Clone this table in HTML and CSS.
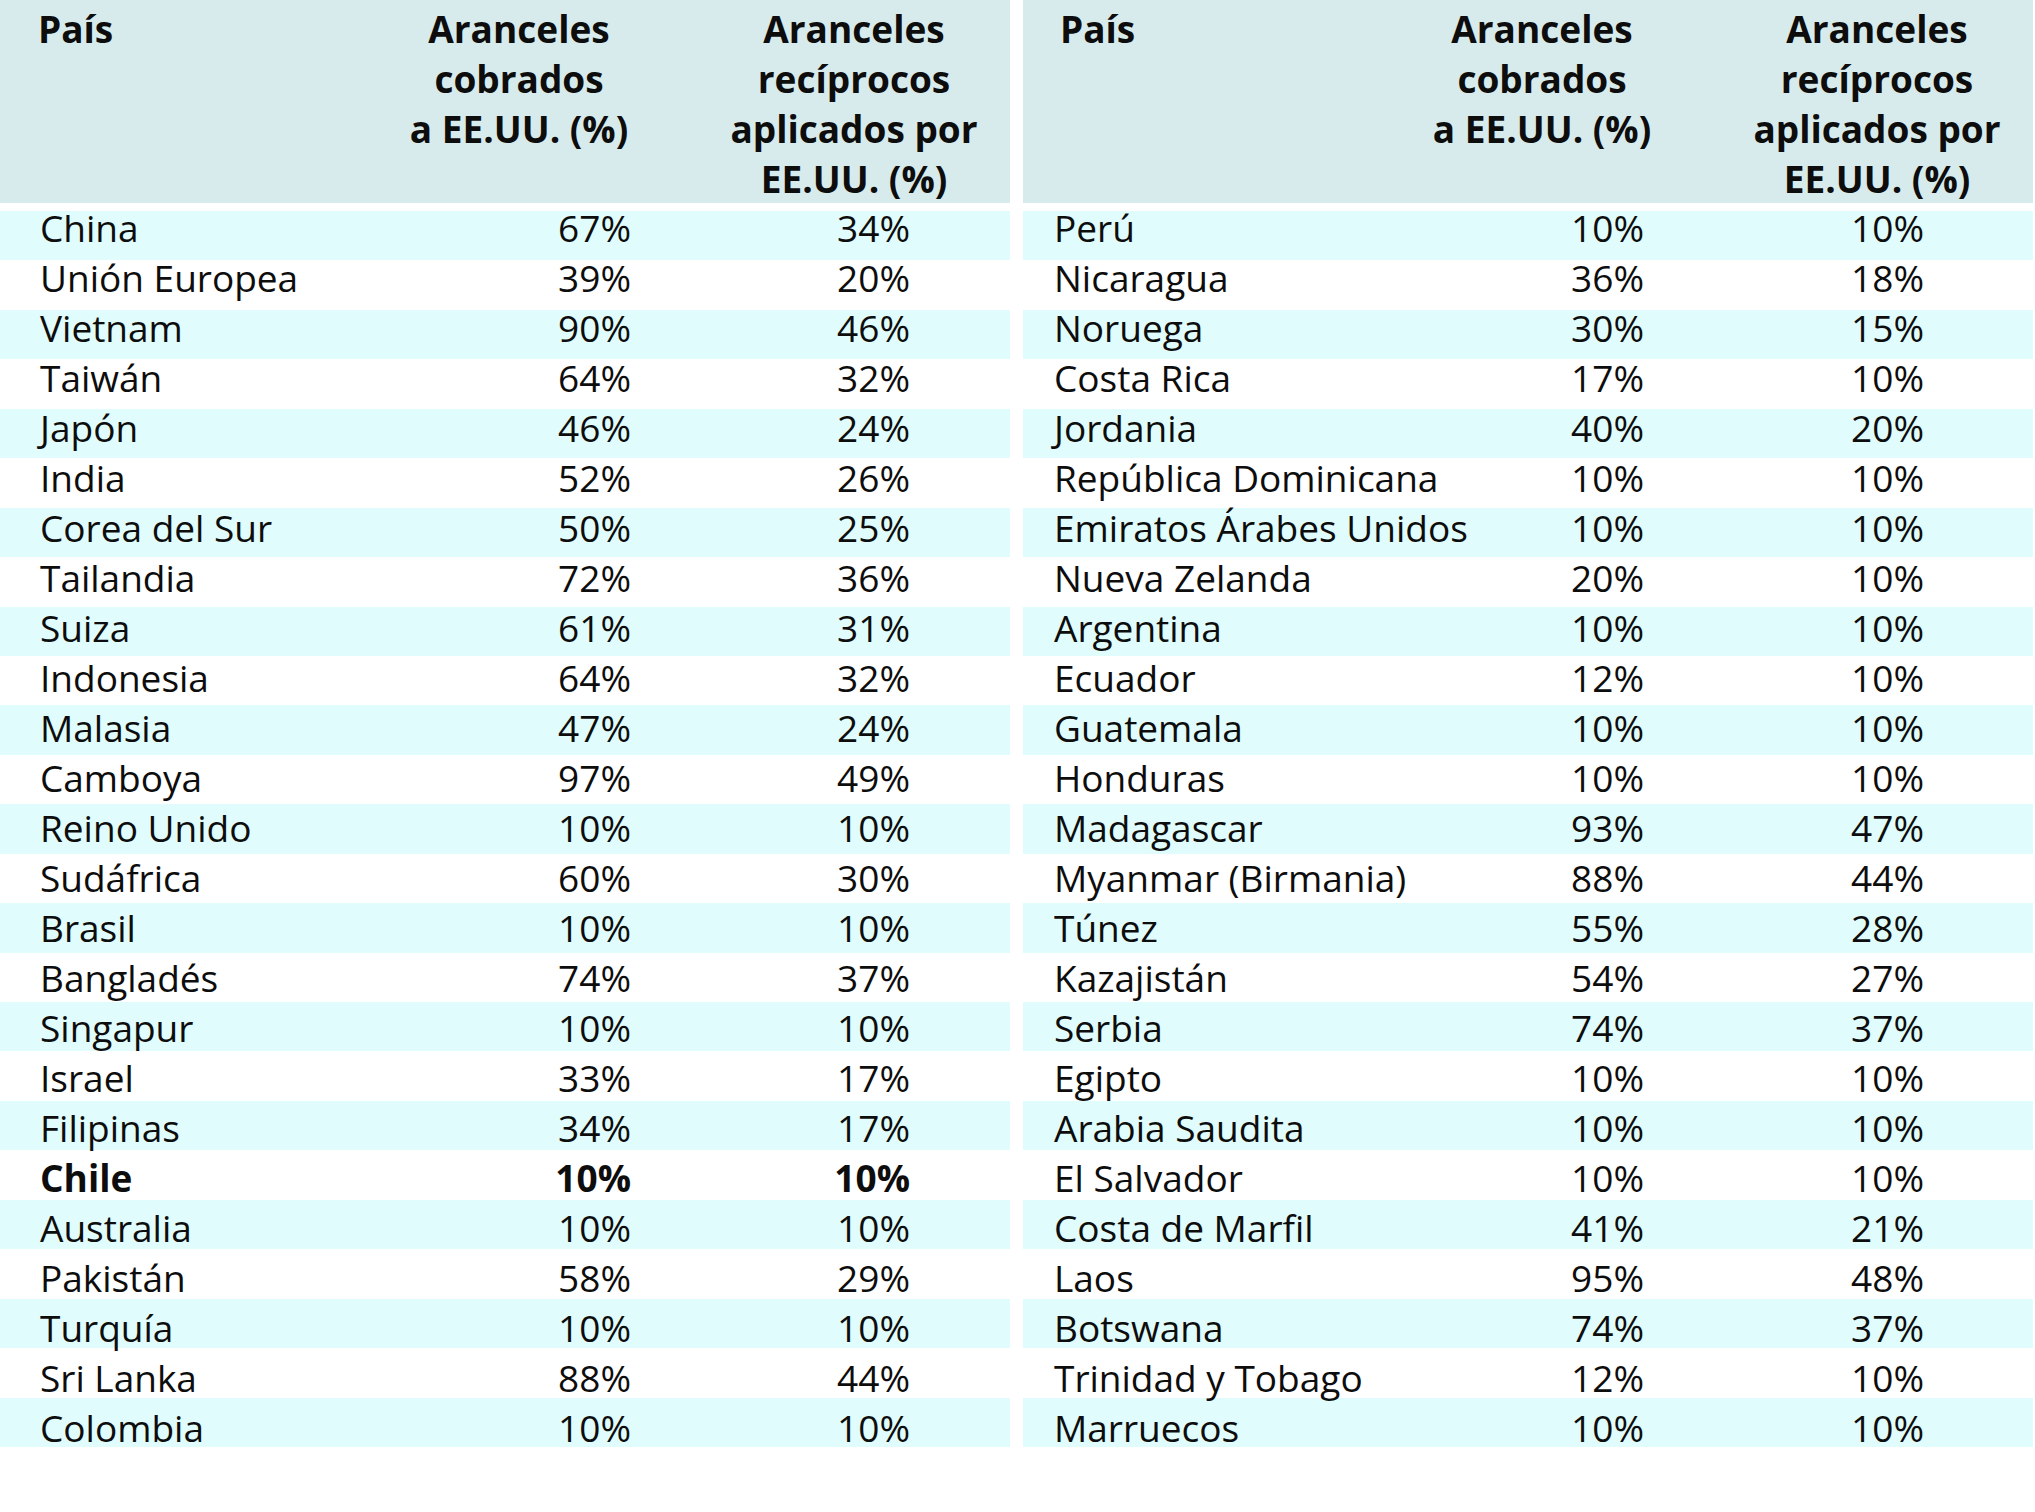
FILE: index.html
```html
<!DOCTYPE html>
<html lang="es">
<head>
<meta charset="utf-8">
<title>Aranceles</title>
<link rel="stylesheet" href="styles.css">
</head>
<body>
<div class="page">
  <div class="tbl tbl-a">
    <div class="thead">
      <div class="h h-name">País</div>
      <div class="h h-c2"><span>Aranceles</span><span>cobrados</span><span>a EE.UU. (%)</span></div>
      <div class="h h-c3"><span>Aranceles</span><span>recíprocos</span><span>aplicados por</span><span>EE.UU. (%)</span></div>
    </div>
    <div class="tbody">
      <div class="row"><div class="c name">China</div><div class="c v2">67%</div><div class="c v3">34%</div></div>
      <div class="row"><div class="c name">Unión Europea</div><div class="c v2">39%</div><div class="c v3">20%</div></div>
      <div class="row"><div class="c name">Vietnam</div><div class="c v2">90%</div><div class="c v3">46%</div></div>
      <div class="row"><div class="c name">Taiwán</div><div class="c v2">64%</div><div class="c v3">32%</div></div>
      <div class="row"><div class="c name">Japón</div><div class="c v2">46%</div><div class="c v3">24%</div></div>
      <div class="row"><div class="c name">India</div><div class="c v2">52%</div><div class="c v3">26%</div></div>
      <div class="row"><div class="c name">Corea del Sur</div><div class="c v2">50%</div><div class="c v3">25%</div></div>
      <div class="row"><div class="c name">Tailandia</div><div class="c v2">72%</div><div class="c v3">36%</div></div>
      <div class="row"><div class="c name">Suiza</div><div class="c v2">61%</div><div class="c v3">31%</div></div>
      <div class="row"><div class="c name">Indonesia</div><div class="c v2">64%</div><div class="c v3">32%</div></div>
      <div class="row"><div class="c name">Malasia</div><div class="c v2">47%</div><div class="c v3">24%</div></div>
      <div class="row"><div class="c name">Camboya</div><div class="c v2">97%</div><div class="c v3">49%</div></div>
      <div class="row"><div class="c name">Reino Unido</div><div class="c v2">10%</div><div class="c v3">10%</div></div>
      <div class="row"><div class="c name">Sudáfrica</div><div class="c v2">60%</div><div class="c v3">30%</div></div>
      <div class="row"><div class="c name">Brasil</div><div class="c v2">10%</div><div class="c v3">10%</div></div>
      <div class="row"><div class="c name">Bangladés</div><div class="c v2">74%</div><div class="c v3">37%</div></div>
      <div class="row"><div class="c name">Singapur</div><div class="c v2">10%</div><div class="c v3">10%</div></div>
      <div class="row"><div class="c name">Israel</div><div class="c v2">33%</div><div class="c v3">17%</div></div>
      <div class="row"><div class="c name">Filipinas</div><div class="c v2">34%</div><div class="c v3">17%</div></div>
      <div class="row row-hl"><div class="c name">Chile</div><div class="c v2">10%</div><div class="c v3">10%</div></div>
      <div class="row"><div class="c name">Australia</div><div class="c v2">10%</div><div class="c v3">10%</div></div>
      <div class="row"><div class="c name">Pakistán</div><div class="c v2">58%</div><div class="c v3">29%</div></div>
      <div class="row"><div class="c name">Turquía</div><div class="c v2">10%</div><div class="c v3">10%</div></div>
      <div class="row"><div class="c name">Sri Lanka</div><div class="c v2">88%</div><div class="c v3">44%</div></div>
      <div class="row"><div class="c name">Colombia</div><div class="c v2">10%</div><div class="c v3">10%</div></div>
    </div>
  </div>
  <div class="tbl tbl-b">
    <div class="thead">
      <div class="h h-name">País</div>
      <div class="h h-c2"><span>Aranceles</span><span>cobrados</span><span>a EE.UU. (%)</span></div>
      <div class="h h-c3"><span>Aranceles</span><span>recíprocos</span><span>aplicados por</span><span>EE.UU. (%)</span></div>
    </div>
    <div class="tbody">
      <div class="row"><div class="c name">Perú</div><div class="c v2">10%</div><div class="c v3">10%</div></div>
      <div class="row"><div class="c name">Nicaragua</div><div class="c v2">36%</div><div class="c v3">18%</div></div>
      <div class="row"><div class="c name">Noruega</div><div class="c v2">30%</div><div class="c v3">15%</div></div>
      <div class="row"><div class="c name">Costa Rica</div><div class="c v2">17%</div><div class="c v3">10%</div></div>
      <div class="row"><div class="c name">Jordania</div><div class="c v2">40%</div><div class="c v3">20%</div></div>
      <div class="row"><div class="c name">República Dominicana</div><div class="c v2">10%</div><div class="c v3">10%</div></div>
      <div class="row"><div class="c name">Emiratos Árabes Unidos</div><div class="c v2">10%</div><div class="c v3">10%</div></div>
      <div class="row"><div class="c name">Nueva Zelanda</div><div class="c v2">20%</div><div class="c v3">10%</div></div>
      <div class="row"><div class="c name">Argentina</div><div class="c v2">10%</div><div class="c v3">10%</div></div>
      <div class="row"><div class="c name">Ecuador</div><div class="c v2">12%</div><div class="c v3">10%</div></div>
      <div class="row"><div class="c name">Guatemala</div><div class="c v2">10%</div><div class="c v3">10%</div></div>
      <div class="row"><div class="c name">Honduras</div><div class="c v2">10%</div><div class="c v3">10%</div></div>
      <div class="row"><div class="c name">Madagascar</div><div class="c v2">93%</div><div class="c v3">47%</div></div>
      <div class="row"><div class="c name">Myanmar (Birmania)</div><div class="c v2">88%</div><div class="c v3">44%</div></div>
      <div class="row"><div class="c name">Túnez</div><div class="c v2">55%</div><div class="c v3">28%</div></div>
      <div class="row"><div class="c name">Kazajistán</div><div class="c v2">54%</div><div class="c v3">27%</div></div>
      <div class="row"><div class="c name">Serbia</div><div class="c v2">74%</div><div class="c v3">37%</div></div>
      <div class="row"><div class="c name">Egipto</div><div class="c v2">10%</div><div class="c v3">10%</div></div>
      <div class="row"><div class="c name">Arabia Saudita</div><div class="c v2">10%</div><div class="c v3">10%</div></div>
      <div class="row"><div class="c name">El Salvador</div><div class="c v2">10%</div><div class="c v3">10%</div></div>
      <div class="row"><div class="c name">Costa de Marfil</div><div class="c v2">41%</div><div class="c v3">21%</div></div>
      <div class="row"><div class="c name">Laos</div><div class="c v2">95%</div><div class="c v3">48%</div></div>
      <div class="row"><div class="c name">Botswana</div><div class="c v2">74%</div><div class="c v3">37%</div></div>
      <div class="row"><div class="c name">Trinidad y Tobago</div><div class="c v2">12%</div><div class="c v3">10%</div></div>
      <div class="row"><div class="c name">Marruecos</div><div class="c v2">10%</div><div class="c v3">10%</div></div>
    </div>
  </div>
</div>
</body>
</html>
```

FILE: styles.css
```css
html, body {
  margin: 0;
  padding: 0;
  background: #ffffff;
}

body {
  font-family: "Open Sans", "Noto Sans", "DejaVu Sans", sans-serif;
  font-size: 37px;
  color: #0d0d0d;
}

.page {
  display: flex;
  gap: 13px;
  width: 2035px;
}

.tbl {
  width: 1010px;
  display: flex;
  flex-direction: column;
}

.tbl-a .thead,
.tbl-a .row {
  display: grid;
  grid-template-columns: 405px 228px 377px;
}

.tbl-b .thead,
.tbl-b .row {
  display: grid;
  grid-template-columns: 417px 204px 389px;
}

.thead {
  background: #d7ebec;
  height: 203px;
  box-sizing: border-box;
  padding-top: 3.5px;
  margin-bottom: 8px;
  overflow: hidden;
}

.h {
  font-weight: 700;
  line-height: 50px;
  white-space: nowrap;
}

.h-c2,
.h-c3 {
  display: flex;
  flex-direction: column;
  align-items: center;
}

.tbl-a .h-name { padding-left: 38px; }
.tbl-b .h-name { padding-left: 37px; }
.tbl-a .h-c3 { padding-left: 65px; }
.tbl-b .h-c3 { padding-left: 77px; }

/* Alternating stripes: cyan / white bands */
.tbody {
  display: flex;
  flex-direction: column;
  background-image: repeating-linear-gradient(
    to bottom,
    #e0fcfc 0px,
    #e0fcfc 49.44px,
    #ffffff 49.44px,
    #ffffff 98.88px
  );
  background-size: 100% 1236px;
  background-repeat: no-repeat;
}

.row {
  height: 50px;
}

.c {
  line-height: 33.2px;
  white-space: nowrap;
}

.v2,
.v3 {
  text-align: right;
}

.tbl-a .name { padding-left: 40px; }
.tbl-b .name { padding-left: 31px; }
.tbl-a .v2 { padding-right: 2px; }
.tbl-b .v2 { padding-right: 0; }
.tbl-a .v3 { padding-right: 100px; }
.tbl-b .v3 { padding-right: 109px; }

.row-hl .c {
  font-weight: 700;
}
```
